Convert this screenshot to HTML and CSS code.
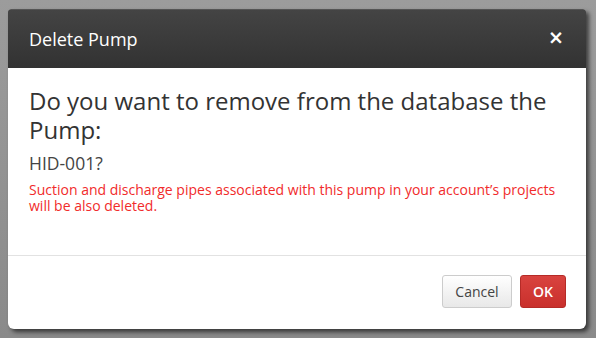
FILE: index.html
```html
<!DOCTYPE html>
<html lang="en">
<head>
    <meta charset="UTF-8">
    <title>Delete Pump</title>
    <link rel="stylesheet" href="styles.css">
</head>
<body>
    <div class="backdrop">
        <div class="modal">
            <div class="modal-header">
                <h4>Delete Pump</h4>
                <span class="close">&times;</span>
            </div>
            <div class="modal-body">
                <h3>Do you want to remove from the database the Pump:</h3>
                <p class="pump-name">HID-001?</p>
                <p class="warning">Suction and discharge pipes associated with this pump in your account’s projects will be also deleted.</p>
            </div>
            <div class="modal-footer">
                <button class="btn-cancel">Cancel</button>
                <button class="btn-ok">OK</button>
            </div>
        </div>
    </div>
</body>
</html>
```

FILE: styles.css
```css
body, html { margin: 0; padding: 0; width: 100%; height: 100%; font-family: "Open Sans", sans-serif; background: #8c8c8c; overflow: hidden; }
.backdrop { padding: 9px 10px 9px 8px; background: linear-gradient(#9c9c9c, #8a8a8a); height: 100%; box-sizing: border-box; }
.modal { width: 578px; height: 320px; background: #fff; border-radius: 3px 3px 6px 6px; box-shadow: 3px 3px 4px rgba(0,0,0,0.6); display: flex; flex-direction: column; overflow: hidden; }
.modal-header { height: 59px; flex-shrink: 0; background: linear-gradient(#444, #323232); border-top: 1px solid #555; box-sizing: border-box; display: flex; align-items: center; justify-content: space-between; padding: 0 22px 0 21px; color: #fff; }
.modal-header h4 { margin: 0; font-size: 18px; font-weight: 400; }
.close { font-family: "DejaVu Sans", sans-serif; font-size: 19px; font-weight: bold; line-height: 1; margin-top: -4px; }
.modal-body { flex-grow: 1; padding: 18px 10px 0 21px; }
.modal-body h3 { margin: 0; font-size: 24px; font-weight: 400; line-height: 29px; color: #333; padding-right: 11px; }
.pump-name { margin: 7px 0 0; font-size: 17.5px; color: #444; }
.warning { margin: 7px 0 0; font-size: 14px; line-height: 16px; color: #f12b2b; }
.modal-footer { height: 74px; flex-shrink: 0; border-top: 1px solid #e2e2e2; box-sizing: border-box; display: flex; justify-content: flex-end; align-items: flex-start; gap: 8px; padding: 19px 20px 0 0; }
button { font-family: "Open Sans", sans-serif; font-size: 14px; height: 33px; border-radius: 3px; cursor: pointer; padding: 0 12px; }
.btn-cancel { width: 70px; background: linear-gradient(#fff, #e8e8e8); border: 1px solid #ccc; color: #444; }
.btn-ok { width: 46px; background: linear-gradient(#d9433f, #c9302c); border: 1px solid #b52b27; color: #fff; font-weight: 600; }
```
